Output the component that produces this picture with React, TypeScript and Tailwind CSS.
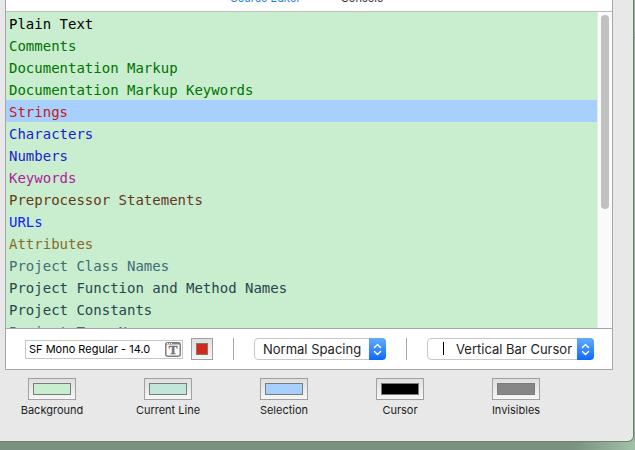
import React, { useState } from "react";

const syntaxKinds = [
  { name: "Plain Text", color: "text-black" },
  { name: "Comments", color: "text-[#007400]" },
  { name: "Documentation Markup", color: "text-[#007400]" },
  { name: "Documentation Markup Keywords", color: "text-[#007400]" },
  { name: "Strings", color: "text-[#c41a16]" },
  { name: "Characters", color: "text-[#1c1ccf]" },
  { name: "Numbers", color: "text-[#1c1ccf]" },
  { name: "Keywords", color: "text-[#b0209a]" },
  { name: "Preprocessor Statements", color: "text-[#643820]" },
  { name: "URLs", color: "text-[#0e1eff]" },
  { name: "Attributes", color: "text-[#836c28]" },
  { name: "Project Class Names", color: "text-[#3f6e74]" },
  { name: "Project Function and Method Names", color: "text-[#26474b]" },
  { name: "Project Constants", color: "text-[#26474b]" },
  { name: "Project Type Names", color: "text-[#3f6e74]" },
];

const swatches = [
  { name: "Background", fill: "bg-[#c9edcf]" },
  { name: "Current Line", fill: "bg-[#c3e6da]" },
  { name: "Selection", fill: "bg-[#a7d0ff]" },
  { name: "Cursor", fill: "bg-black" },
  { name: "Invisibles", fill: "bg-[#868686]" },
];

function Stepper() {
  return (
    <span className="pointer-events-none absolute inset-y-0 right-0 flex w-[17px] items-center justify-center rounded-r-[4px] bg-linear-to-b from-[#5facfb] to-[#0869fb]">
      <svg width="9" height="13" viewBox="0 0 9 13" fill="none" stroke="white" strokeWidth="1.5" strokeLinecap="round" strokeLinejoin="round">
        <path d="M1.5 4.5 4.5 1.5 7.5 4.5M1.5 8.5 4.5 11.5 7.5 8.5" />
      </svg>
    </span>
  );
}

function Popup({ label, width, inset, children }: { label: string; width: string; inset: string; children?: React.ReactNode }) {
  return (
    <div className={`relative h-[22px] ${width}`}>
      <select
        aria-label={label}
        className={`block h-full w-full appearance-none rounded-[4px] border border-[#c8c8c8] bg-white pr-4 font-[Inter,sans-serif] text-[13px] leading-5 text-[#222] ${inset}`}
      >
        <option>{label}</option>
      </select>
      {children}
      <Stepper />
    </div>
  );
}

export default function App() {
  const [selected, setSelected] = useState("Strings");
  return (
    <div className="flex h-screen flex-col overflow-hidden bg-linear-to-r from-[#7a9080] from-90% to-[#a1c1a8] font-[Inter,sans-serif]">
      <div className="flex min-h-0 flex-1">
        <main className="flex min-w-0 flex-1 flex-col rounded-br-[6px] border-r border-b border-[#6f8375] bg-[#e8e8e8] pb-[22px]">
          <section className="mr-5 ml-[5px] flex min-h-0 flex-1 flex-col border-x border-b border-[#a6a6a6] bg-white">
            <nav className="flex h-3 shrink-0 items-end justify-center gap-10 overflow-hidden border-b border-[#bdbdbd] pr-1 pb-[6px] text-[11px] leading-[14px]">
              <button className="text-[#1d7fe0]">Source Editor</button>
              <button className="text-[#333]">Console</button>
            </nav>
            <div className="flex min-h-0 flex-1 border-b border-[#a6a6a6]">
              <ul className="min-w-0 flex-1 overflow-hidden bg-[#c9edcf] font-['DejaVu_Sans_Mono',monospace] text-[14px] leading-[22px]">
                {syntaxKinds.map((k) => (
                  <li key={k.name} className={selected === k.name ? "bg-[#a7d0ff]" : ""}>
                    <button onClick={() => setSelected(k.name)} className={`block h-[22px] w-full pt-px pl-[3px] text-left ${k.color}`}>
                      {k.name}
                    </button>
                  </li>
                ))}
              </ul>
              <div className="w-[15px] border-l border-[#e8e8e8] bg-[#fafafa] pt-[3px] pl-[3px]">
                <div className="h-[194px] w-2 rounded-full bg-[#c1c1c1]" />
              </div>
            </div>
            <div className="flex h-10 shrink-0 items-center pl-[19px]">
              <div className="relative mr-2 w-[158px]">
                <input
                  aria-label="Font"
                  readOnly
                  value="SF Mono Regular - 14.0"
                  className="block h-[19px] w-full border border-[#c6c6c6] bg-white pl-[3px] text-[11px] leading-4 text-black"
                />
                <svg className="absolute top-[2px] right-[2px]" width="16" height="15" viewBox="0 0 16 15">
                  <rect x="0.75" y="0.75" width="14.5" height="13.5" rx="2" fill="white" stroke="#808080" strokeWidth="1.5" />
                  <path d="M1 1.5H15" stroke="#808080" strokeWidth="2" />
                  <path d="M2 1.5H7" stroke="white" strokeWidth="1" strokeDasharray="1 1" />
                  <text x="8" y="12" textAnchor="middle" fontFamily="Liberation Serif, serif" fontWeight="bold" fontSize="13" fill="#707070" stroke="#707070" strokeWidth="0.4">T</text>
                </svg>
              </div>
              <button aria-label="Text color" className="flex h-[22px] w-[22px] items-center justify-center border border-[#a0a0a0] bg-linear-to-b from-[#dedede] to-[#f5f5f5]">
                <span className="h-3 w-3 border border-[#8a7470] bg-[#cf2a1a]" />
              </button>
              <span className="mx-5 h-[22px] w-px bg-[#a6a6a6]" />
              <Popup label="Normal Spacing" width="w-[132px]" inset="pl-2" />
              <span className="mx-5 h-[22px] w-px bg-[#a6a6a6]" />
              <Popup label="Vertical Bar Cursor" width="w-[167px]" inset="pl-7">
                <span className="pointer-events-none absolute top-[4px] left-4 h-[13px] w-px bg-black" />
              </Popup>
            </div>
          </section>
          <div className="flex gap-10 pt-2 pl-[14px]">
            {swatches.map((s) => (
              <label key={s.name} className="flex w-[76px] flex-col items-center gap-px text-[11px] leading-[18px] whitespace-nowrap text-[#1c1c1c]">
                <button className="flex h-[22px] w-12 items-center justify-center border border-[#a0a0a0] bg-linear-to-b from-[#dedede] to-[#f7f7f7]">
                  <span className={`h-3 w-[38px] border border-[#7b7b7b] ${s.fill}`} />
                </button>
                {s.name}
              </label>
            ))}
          </div>
        </main>
        <aside className="w-px shrink-0 overflow-hidden bg-[#8eae98] pt-[30px] font-['DejaVu_Sans_Mono',monospace] text-[14px] leading-5 text-[#3f5f00]">
          <p>t</p>
          <p>r</p>
        </aside>
      </div>
      <div className="h-2 shrink-0" />
    </div>
  );
}
